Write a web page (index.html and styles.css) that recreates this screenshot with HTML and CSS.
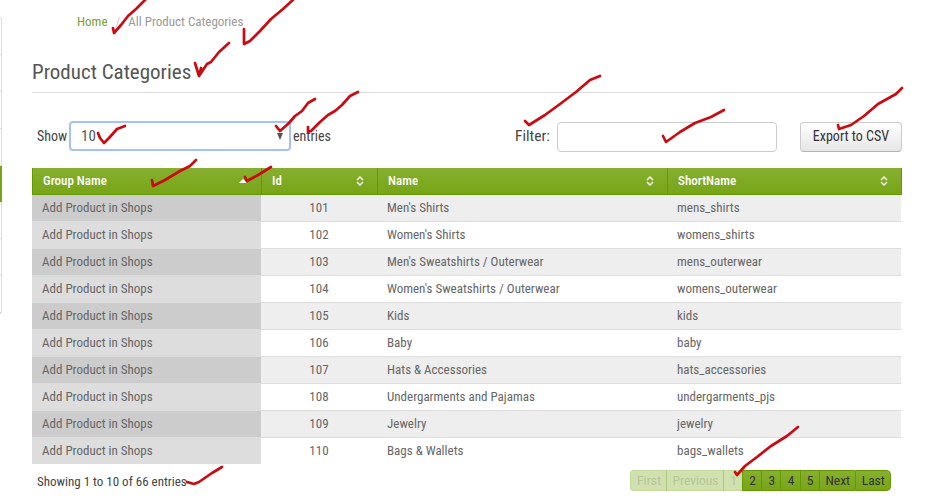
FILE: index.html
```
<!DOCTYPE html>
<html lang="en">
<head>
<meta charset="utf-8">
<title>Product Categories</title>
<link rel="stylesheet" href="styles.css">
</head>
<body>
<div class="layout">
  <nav class="side"><i></i><i></i><i></i><i></i><i class="current"></i><i></i><i></i><i></i></nav>
  <main>
    <div class="crumbs"><a>Home</a><span class="sep">/</span><span>All Product Categories</span></div>
    <h1>Product Categories</h1>
    <div class="toolbar">
      <span class="show">Show</span>
      <div class="select"><span>10</span><svg width="6" height="7" viewBox="0 0 6 7"><path d="M0 0h6L3 7z" fill="#555"/></svg></div>
      <span class="entries">entries</span>
      <span class="filter">Filter:</span>
      <input class="search" type="text" aria-label="Filter">
      <button>Export to CSV</button>
    </div>
    <table>
      <colgroup><col class="c1"><col class="c2"><col class="c3"><col class="c4"></colgroup>
      <thead><tr>
        <th><div>Group Name<svg class="asc" width="8" height="4" viewBox="0 0 8 4"><path d="M0 4L4 0l4 4z" fill="#fff"/></svg></div></th>
        <th><div>Id<svg width="8" height="10" viewBox="0 0 8 10"><path d="M1 4l3-3 3 3M1 6l3 3 3-3"/></svg></div></th>
        <th><div>Name<svg width="8" height="10" viewBox="0 0 8 10"><path d="M1 4l3-3 3 3M1 6l3 3 3-3"/></svg></div></th>
        <th><div>ShortName<svg width="8" height="10" viewBox="0 0 8 10"><path d="M1 4l3-3 3 3M1 6l3 3 3-3"/></svg></div></th>
      </tr></thead>
      <tbody>
        <tr><td>Add Product in Shops</td><td>101</td><td>Men's Shirts</td><td>mens_shirts</td></tr>
        <tr><td>Add Product in Shops</td><td>102</td><td>Women's Shirts</td><td>womens_shirts</td></tr>
        <tr><td>Add Product in Shops</td><td>103</td><td>Men's Sweatshirts / Outerwear</td><td>mens_outerwear</td></tr>
        <tr><td>Add Product in Shops</td><td>104</td><td>Women's Sweatshirts / Outerwear</td><td>womens_outerwear</td></tr>
        <tr><td>Add Product in Shops</td><td>105</td><td>Kids</td><td>kids</td></tr>
        <tr><td>Add Product in Shops</td><td>106</td><td>Baby</td><td>baby</td></tr>
        <tr><td>Add Product in Shops</td><td>107</td><td>Hats &amp; Accessories</td><td>hats_accessories</td></tr>
        <tr><td>Add Product in Shops</td><td>108</td><td>Undergarments and Pajamas</td><td>undergarments_pjs</td></tr>
        <tr><td>Add Product in Shops</td><td>109</td><td>Jewelry</td><td>jewelry</td></tr>
        <tr><td>Add Product in Shops</td><td>110</td><td>Bags &amp; Wallets</td><td>bags_wallets</td></tr>
      </tbody>
    </table>
    <div class="bottom">
      <span>Showing 1 to 10 of 66 entries</span>
      <div class="pager"><a class="off p1">First</a><a class="off p2">Previous</a><a class="off p3">1</a><a>2</a><a>3</a><a>4</a><a>5</a><a class="p4">Next</a><a class="p5">Last</a></div>
    </div>
  </main>
</div>
<svg class="marks" width="931" height="498" viewBox="0 0 931 498">
  <path d="M147 -2L136 9 128 16 121 25 114 33 113 28"/>
  <path d="M295 -2L283 9 271 19 260 31 250 41 244 44V29"/>
  <path d="M229 43L219 52 211 62 207 64 199 76 195 63M199 76L201 68"/>
  <path d="M125 126L117 129 109 138 104 143 100 138 98 133"/>
  <path d="M315 99L308 103 302 111 295 116 289 123 280 131 276 126"/>
  <path d="M358 92L350 96 342 105 335 111 328 115 320 122 311 131 308 132 308 127"/>
  <path d="M600 76L590 80 576 92 560 104 545 115 529 125 525 121"/>
  <path d="M724 110L711 117 695 123 680 132 666 142 663 136"/>
  <path d="M902 88L896 94 878 104 864 116 851 125 839 129 838 125"/>
  <path d="M196 160L190 166 180 171 165 180 153 186 152 180"/>
  <path d="M271 167L258 175 247 181 245 177"/>
  <path d="M798 427L787 436 771 446 757 457 745 466 737 475 735 472"/>
  <path d="M222 467L212 473 199 482 194 484 187 482"/>
</svg>
</body>
</html>
```
FILE: styles.css
```
* { box-sizing: border-box; }
body {
  margin: 0; background: #fff; color: #444; height: 498px; overflow: hidden;
  font: 14px/20px "Roboto Condensed", Roboto, sans-serif; font-stretch: 75%;
}
.layout { display: flex; }
.side {
  width: 2px; height: 297px; margin-top: 17px; display: flex; flex-direction: column;
  border: 1px solid #ddd; border-left: 0; border-radius: 0 3px 3px 0; flex: none;
}
.side i { height: 37px; border-bottom: 1px solid #ddd; flex: none; }
.side .current { background: #77a517; width: 2px; height: 36px; border: 0; margin-right: -1px; }
main { width: 870px; margin-left: 30px; flex: none; }
.crumbs { padding: 12px 0 0 45px; height: 32px; color: #999; display: flex; font-size: 13px; }
.crumbs a { color: #77a03a; }
.crumbs .sep { margin: 0 8px 0 8px; color: #ccc; }
h1 { margin: 20px 0 0; height: 41px; border-bottom: 1px solid #ddd; font-size: 21px; line-height: 40px; font-weight: 400; color: #555; }
.toolbar { display: flex; align-items: center; height: 30px; margin-top: 28px; padding-left: 5px; color: #444; }
.show { width: 32px; }
.select {
  width: 222px; height: 30px; border: 2px solid #a4c2f7; border-radius: 4px;
  display: flex; align-items: center; justify-content: space-between; padding: 0 6px 0 10px; font-size: 15px; color: #555;
}
.entries { margin-left: 2px; width: 222px; }
.filter { font-size: 15.5px; width: 42px; white-space: nowrap; }
.search { width: 220px; height: 30px; border: 1px solid #ccc; border-radius: 4px; background: #fff; margin: 2px 0 0; }
button {
  width: 102px; height: 30px; margin: 2px 0 0 23px; padding: 0 0 2px; font: inherit; font-stretch: 75%; color: #333; white-space: nowrap;
  border: 1px solid #ccc; border-bottom-color: #b3b3b3; border-radius: 4px; background: linear-gradient(#fff, #e6e6e6);
}
table { width: 870px; margin-top: 17px; border-collapse: separate; border-spacing: 0; table-layout: fixed; }
.c1 { width: 229px; } .c2 { width: 116px; } .c3 { width: 290px; } .c4 { width: 235px; }
th {
  height: 27px; padding: 0 13px 0 10px; text-align: left; font-size: 13px; line-height: 26px; font-weight: 500; color: #fff;
  border-left: 1px solid #669900; border-bottom: 1px solid #669900; background: linear-gradient(#86af2f, #77a517);
}
th:last-child { border-right: 1px solid #669900; }
th div { display: flex; align-items: center; justify-content: space-between; height: 26px; }
th svg { fill: none; stroke: #fff; stroke-width: 1.4; }
th .asc { stroke: none; margin-right: 1px; }
td { height: 27px; padding: 0 10px; line-height: 26px; font-size: 13px; color: #666; border-bottom: 1px solid #ddd; }
td:nth-child(2) { text-align: center; }
td:first-child { background: #ddd; }
tr:nth-child(odd) td { background: #eee; }
tr:nth-child(odd) td:first-child { background: #ccc; }
tbody tr:last-child td { border-bottom-color: #fff; }
td:last-child { border-right: 1px solid #fff; }
.bottom { display: flex; justify-content: space-between; padding: 5px 11px 0 5px; color: #444; }
.bottom > span { padding-top: 2px; font-size: 13px; }
.pager { display: flex; width: 261px; height: 21px; border-radius: 4px; overflow: hidden; }
.pager a {
  flex: none; width: 19.2px; height: 21px; line-height: 19px; padding-left: 1px; text-align: center; color: #333; font-size: 13.5px;
  border: 1px solid #669900; border-right: 0; background: linear-gradient(#86af2f, #77a517);
}
.pager .off { color: #b5c89a; background: #d0e0ae; border-color: #c5d99c; border-left-color: #a9c97a; }
.pager .p1 { width: 36px; border-left-color: #c5d99c; } .pager .p2 { width: 57px; } .pager .p3 { width: 19px; }
.pager .p4 { width: 36px; } .pager .p5 { width: 36px; border-right: 1px solid #669900; border-radius: 0 4px 4px 0; }
.marks { position: absolute; inset: 0; pointer-events: none; fill: none; stroke: #c80c12; stroke-width: 2.7; stroke-linecap: round; stroke-linejoin: round; }
```
